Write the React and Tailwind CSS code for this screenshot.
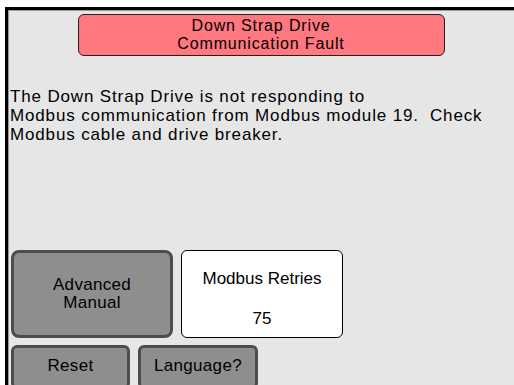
export default function App() {
  return (
    <div className="w-[514px] h-[385px] overflow-hidden bg-white pt-[7px] pl-[5px] font-['Liberation_Sans',Arial,sans-serif] text-black">
      {/* Screen panel */}
      <div className="h-[378px] border-t-[3px] border-l-[3px] border-black bg-[#e6e6e6] shadow-[inset_1px_1px_0_#9a9a9a] flex flex-col">
        {/* Fault banner */}
        <div className="mx-auto mt-1 w-[367px] h-[42px] shrink-0 rounded-[6px] border border-[#222] bg-[#ff7880] flex flex-col items-center justify-center text-[16px] leading-[18px] tracking-[0.85px]">
          <span>Down Strap Drive</span>
          <span>Communication Fault</span>
        </div>

        {/* Message */}
        <p className="mt-[31px] pl-[2px] text-[17px] leading-[19px] tracking-[0.85px] whitespace-pre">
          {"The Down Strap Drive is not responding to\nModbus communication from Modbus module 19.  Check\nModbus cable and drive breaker."}
        </p>

        {/* Controls */}
        <div className="mt-[106px] pl-[3px] flex flex-col gap-[7px]">
          <div className="flex gap-2">
            <button className="w-[162px] h-[88px] rounded-[8px] border-[3px] border-[#4d4d4d] bg-[#8e8e8e] flex flex-col items-center justify-center text-[17px] leading-[18px] tracking-[0.3px]">
              <span>Advanced</span>
              <span>Manual</span>
            </button>
            <div className="w-[162px] h-[88px] rounded-[6px] border border-black bg-white flex flex-col items-center justify-between pt-[19px] pb-[9px] text-[17px] leading-[18px]">
              <span>Modbus Retries</span>
              <span>75</span>
            </div>
          </div>
          <div className="flex gap-2">
            <button className="w-[119px] h-[44px] rounded-[6px] border-[3px] border-[#4d4d4d] bg-[#8e8e8e] text-[17px] tracking-[0.3px] pb-[3px]">
              Reset
            </button>
            <button className="w-[120px] h-[44px] rounded-[6px] border-[3px] border-[#4d4d4d] bg-[#8e8e8e] text-[17px] tracking-[0.3px] pb-[3px]">
              Language?
            </button>
          </div>
        </div>
      </div>
    </div>
  )
}
